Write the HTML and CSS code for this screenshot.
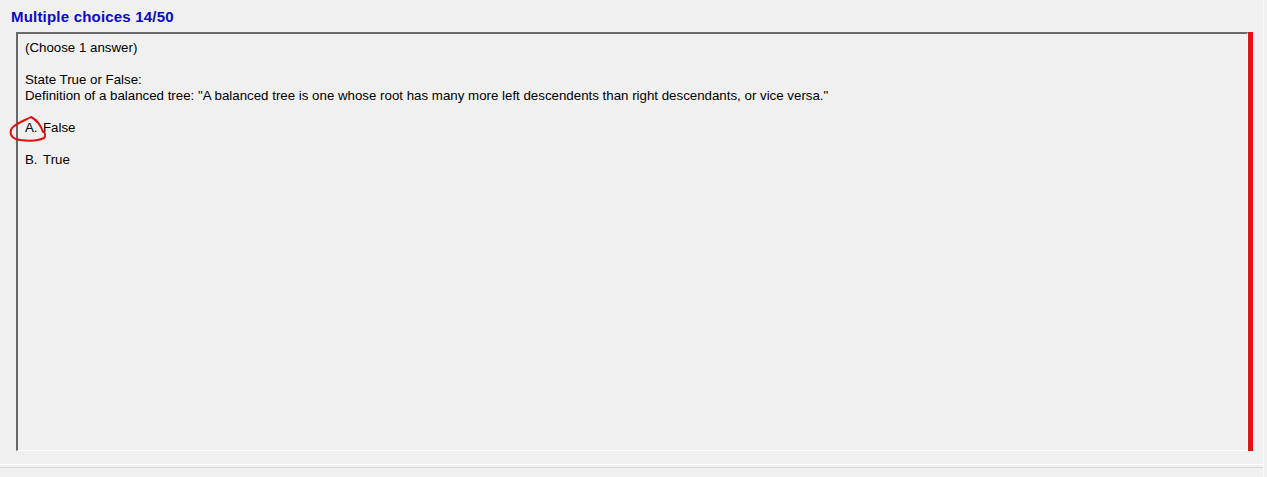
FILE: index.html
```html
<!DOCTYPE html>
<html>
<head>
<meta charset="utf-8">
<link rel="stylesheet" href="styles.css">
</head>
<body>
<div class="page">
  <div class="title">Multiple choices 14/50</div>
  <div class="row">
    <div class="box">
      <p class="line">(Choose 1 answer)</p>
      <p class="line">&nbsp;</p>
      <p class="line">State True or False:</p>
      <p class="line">Definition of a balanced tree: "A balanced tree is one whose root has many more left descendents than right descendants, or vice versa."</p>
      <p class="line">&nbsp;</p>
      <p class="line"><span class="key">A.</span>False</p>
      <p class="line">&nbsp;</p>
      <p class="line"><span class="key">B.</span>True</p>
      <svg class="mark" width="42" height="30" viewBox="0 0 42 30">
        <path d="M35 18 C33 12 29 6 23 3 C18 6 8 9 4 14 C1 19 3 25 12 26 C20 27 30 27 36 24 C38 22 37 19 35 17" fill="none" stroke="#e01010" stroke-width="2" stroke-linecap="round" stroke-linejoin="round"/>
      </svg>
    </div>
    <div class="redbar"></div>
  </div>
  <div class="bottom"></div>
</div>
</body>
</html>
```
FILE: styles.css
```css
html, body {
  margin: 0;
  padding: 0;
  background: #f0f0f0;
  width: 1267px;
  height: 477px;
  overflow: hidden;
  font-family: "Liberation Sans", Arial, sans-serif;
}
.page {
  position: relative;
  height: 477px;
  border-right: 1px solid #fafafa;
  box-sizing: border-box;
  width: 1264px;
}
.title {
  padding: 8px 0 0 11px;
  height: 23px;
  box-sizing: border-box;
  font-weight: bold;
  font-size: 15px;
  letter-spacing: 0.2px;
  color: #0a0ac8;
  line-height: 17px;
}
.row {
  display: flex;
  margin-top: 9px;
  margin-left: 16px;
  height: 419px;
}
.box {
  position: relative;
  width: 1232px;
  border-left: 2px solid #696969;
  border-top: 2px solid #696969;
  border-right: 1px solid #fdfdfd;
  border-bottom: 1px solid #fdfdfd;
  box-sizing: border-box;
  padding: 6px 0 0 7px;
  font-size: 13.3px;
  color: #000;
}
.line {
  margin: 0;
  line-height: 16px;
  height: 16px;
  white-space: nowrap;
}
.key {
  display: inline-block;
  width: 18px;
}
.redbar {
  width: 5px;
  background: #e01414;
}
.mark {
  position: absolute;
  left: -10px;
  top: 80px;
}
.bottom {
  position: absolute;
  left: 0;
  right: 0;
  top: 464px;
  height: 2px;
  border-top: 1px solid #ffffff;
  border-bottom: 1px solid #d8d8d8;
}
```
